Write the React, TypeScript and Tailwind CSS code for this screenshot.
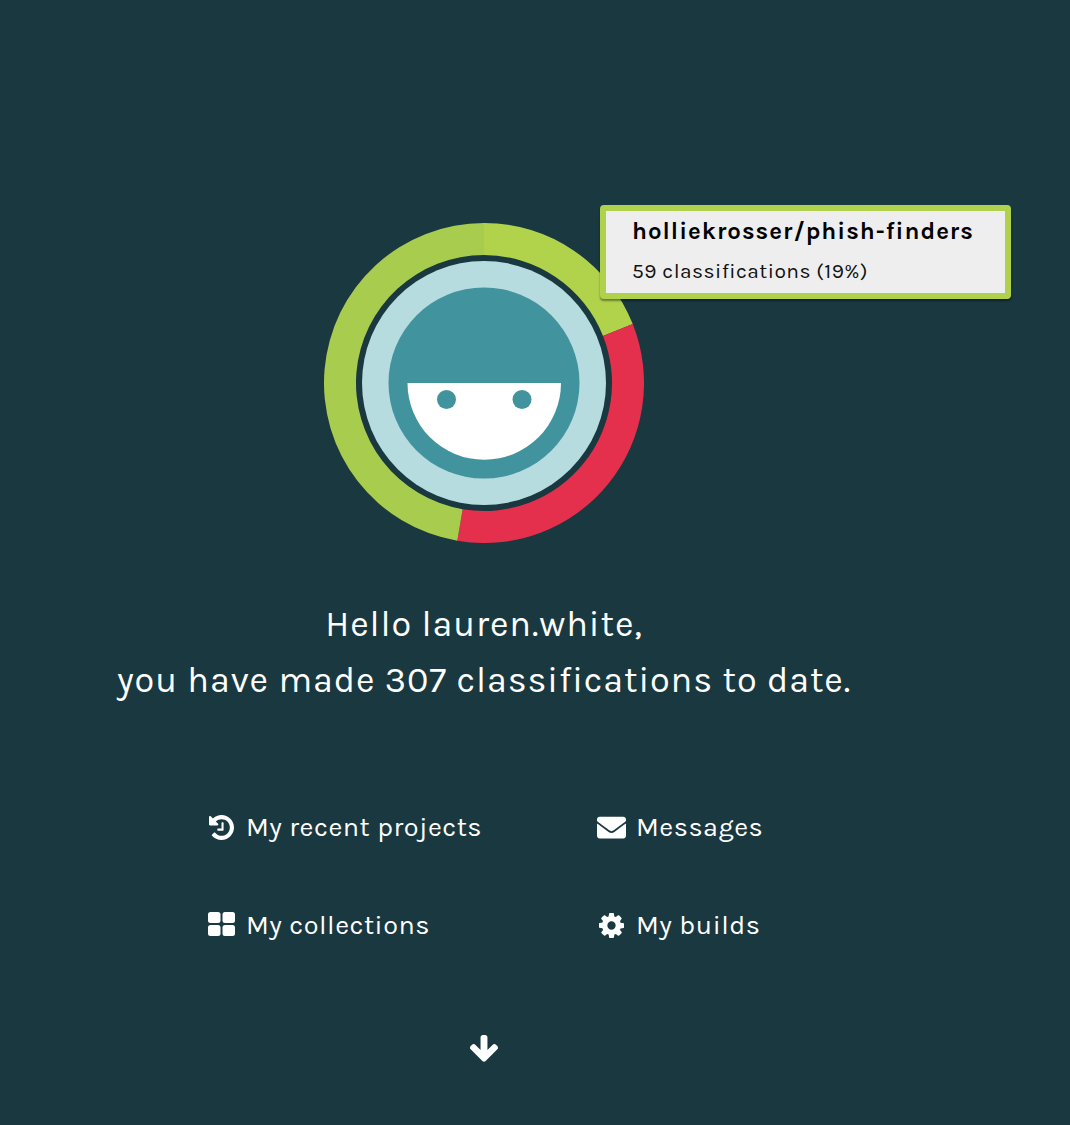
import { FaEnvelope } from 'react-icons/fa';

const CX = 160;
const CY = 160;

function arc(from: number, to: number, outer: number, inner: number): string {
  const point = (deg: number, r: number) => {
    const a = ((deg - 90) * Math.PI) / 180;
    return `${CX + r * Math.cos(a)} ${CY + r * Math.sin(a)}`;
  };
  const large = to - from > 180 ? 1 : 0;
  return `M${point(from, outer)} A${outer} ${outer} 0 ${large} 1 ${point(to, outer)} L${point(to, inner)} A${inner} ${inner} 0 ${large} 0 ${point(from, inner)} Z`;
}

function Avatar() {
  return (
    <svg width="320" height="320" viewBox="0 0 320 320" className="block">
      <path d={arc(0, 68.4, 160, 128)} fill="#b1d34c" />
      <path d={arc(68.4, 189.6, 160, 128)} fill="#e5304d" />
      <path d={arc(189.6, 360, 160, 128)} fill="#a8cc4e" />
      <circle cx="160" cy="160" r="122" fill="#b6dce0" />
      <circle cx="160" cy="160" r="95.5" fill="#41949d" />
      <path d="M83.5 160 H237 A76.75 76.75 0 0 1 83.5 160 Z" fill="#ffffff" />
      <circle cx="122.5" cy="176.5" r="9.5" fill="#41949d" />
      <circle cx="198" cy="176.5" r="9.5" fill="#41949d" />
    </svg>
  );
}

function HistoryIcon() {
  return (
    <svg width="25" height="25" viewBox="128 128 1536 1536" className="block" fill="currentColor">
      <path d="M1664 896q0 156-61 298t-164 245-245 164-298 61q-172 0-327-72.5t-264-204.5q-7-10-6.5-22.5t8.5-20.5l137-138q10-9 25-9 16 2 23 12 73 95 179 147t225 52q104 0 198.5-40.5t163.5-109.5 109.5-163.5 40.5-198.5-40.5-198.5-109.5-163.5-163.5-109.5-198.5-40.5q-98 0-188 35.5t-160 101.5l137 138q31 30 14 69-17 40-59 40h-448q-26 0-45-19t-19-45v-448q0-42 40-59 39-17 69 14l130 129q107-101 244.5-156.5t284.5-55.5q156 0 298 61t245 164 164 245 61 298zm-640-288v448q0 14-9 23t-23 9h-320q-14 0-23-9t-9-23v-64q0-14 9-23t23-9h224v-352q0-14 9-23t23-9h64q14 0 23 9t9 23z" />
    </svg>
  );
}

function GridIcon() {
  return (
    <svg width="27" height="24" viewBox="0 0 27 24" className="block" fill="currentColor">
      <rect x="0" y="0" width="12.5" height="11" rx="2.5" />
      <rect x="14.5" y="0" width="12.5" height="11" rx="2.5" />
      <rect x="0" y="13" width="12.5" height="11" rx="2.5" />
      <rect x="14.5" y="13" width="12.5" height="11" rx="2.5" />
    </svg>
  );
}

function CogIcon() {
  return (
    <svg width="25" height="25" viewBox="128 128 1536 1536" className="block" fill="currentColor">
      <path d="M1152 896q0-106-75-181t-181-75-181 75-75 181 75 181 181 75 181-75 75-181zm512-109v222q0 12-8 23t-20 13l-185 28q-19 54-39 91 35 50 107 138 10 12 10 25t-9 23q-27 37-99 108t-94 71q-12 0-26-9l-138-108q-44 23-91 38-16 136-29 186-7 28-36 28h-222q-14 0-24.5-8.5t-11.5-21.5l-28-184q-49-16-90-37l-141 107q-10 9-25 9-14 0-25-11-126-114-165-168-7-10-7-23 0-12 8-23 15-21 51-66.5t54-70.5q-27-50-41-99l-183-27q-13-2-21-12.5t-8-23.5v-222q0-12 8-23t19-13l186-28q14-46 39-92-40-57-107-138-10-12-10-24 0-10 9-23 26-36 98.5-107.5t94.5-71.5q13 0 26 10l138 107q44-23 91-38 16-136 29-186 7-28 36-28h222q14 0 24.5 8.5t11.5 21.5l28 184q49 16 90 37l142-107q9-9 24-9 13 0 25 10 129 119 165 170 7 8 7 22 0 12-8 23-15 21-51 66.5t-54 70.5q26 50 41 98l183 28q13 2 21 12.5t8 23.5z" />
    </svg>
  );
}

function ArrowIcon() {
  return (
    <svg width="28" height="27" viewBox="117 128 1558 1500" className="block" fill="currentColor">
      <path d="M1675 832q0 53-37 90l-651 652q-39 37-91 37-53 0-90-37l-651-652q-38-36-38-90 0-53 38-91l74-75q39-37 91-37 53 0 90 37l294 294v-704q0-52 38-90t90-38h128q52 0 90 38t38 90v704l294-294q37-37 90-37 52 0 91 37l75 75q37 39 37 91z" />
    </svg>
  );
}

export default function App() {
  return (
    <div className="relative h-[1125px] bg-[#193840] font-['Karla','Lato','Liberation_Sans',sans-serif] text-white">
      <div className="flex w-[968px] flex-col items-center pt-[223px]">
        <Avatar />
        <div className="mt-[53px] text-center text-[36px] leading-[56px] tracking-[0.9px]">
          <div>Hello lauren.white,</div>
          <div>you have made 307 classifications to date.</div>
        </div>
        <div className="mt-[100px] grid w-[552px] grid-cols-[389px_1fr] gap-y-[60px] text-[27px] leading-[38px] tracking-[0.5px]">
          <div className="flex items-center whitespace-nowrap">
            <span className="flex w-[38px] pl-px"><HistoryIcon /></span>My recent projects
          </div>
          <div className="flex items-center whitespace-nowrap">
            <span className="flex w-[39px]"><FaEnvelope size={29} /></span>Messages
          </div>
          <div className="flex items-center whitespace-nowrap">
            <span className="flex w-[38px] pb-[2px]"><GridIcon /></span>My collections
          </div>
          <div className="flex items-center whitespace-nowrap">
            <span className="flex w-[39px] pl-[2px]"><CogIcon /></span>My builds
          </div>
        </div>
        <div className="mt-[91px] flex justify-center">
          <ArrowIcon />
        </div>
      </div>
      <div className="absolute left-[600px] top-[205px] h-[94px] w-[411px] rounded-[4px] border-[6px] border-[#afd14b] bg-[#eeeeee] pl-[26px] text-black shadow-[0_2px_2px_rgba(0,0,0,0.4)]">
        <div className="mt-[2px] text-[24px] font-bold leading-[36px] tracking-[1px]">holliekrosser/phish-finders</div>
        <div className="mt-[7px] text-[21px] leading-[30px] tracking-[0.45px] text-[#111]">59 classifications (19%)</div>
      </div>
    </div>
  );
}
